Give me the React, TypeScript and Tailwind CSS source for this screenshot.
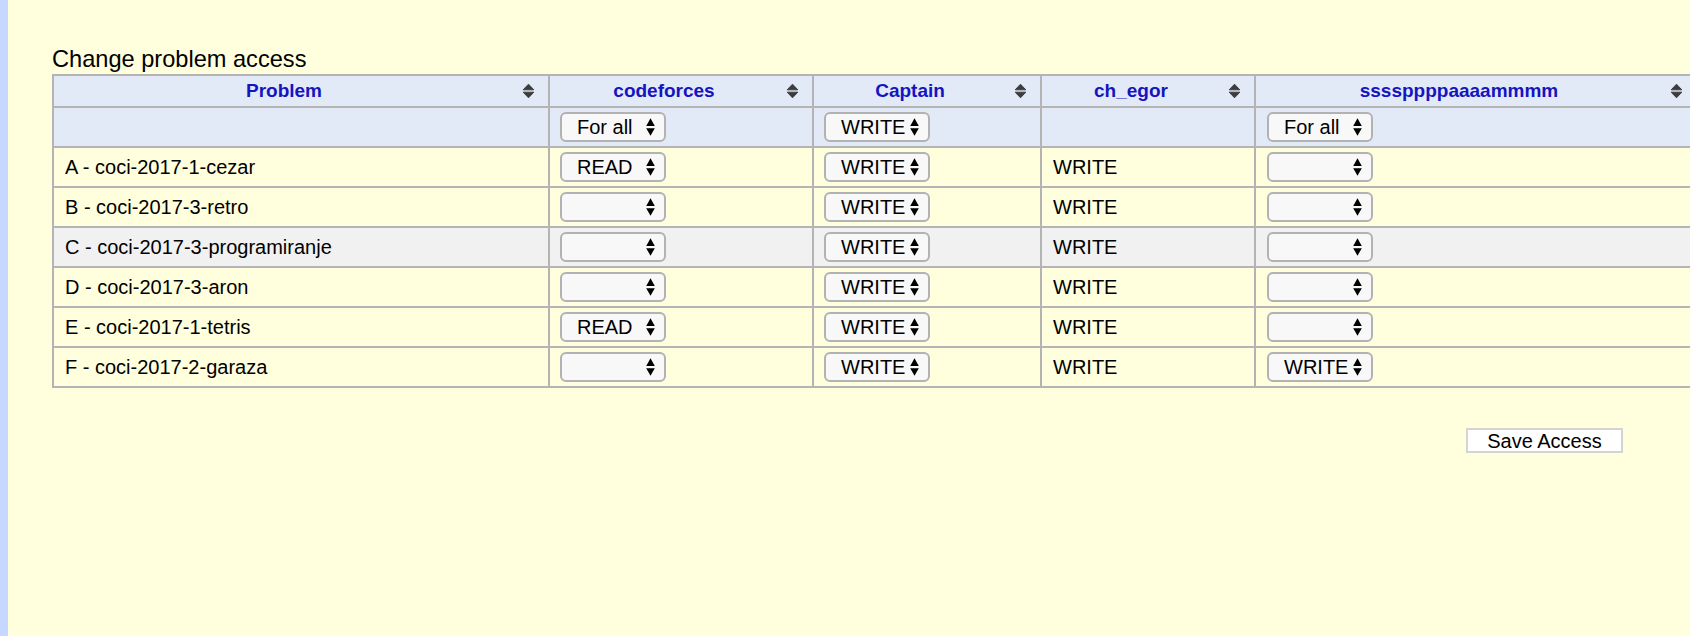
import React from "react";

type Row = {
  name: string;
  codeforces: string;
  captain: string;
  egor: string;
  spam: string;
  shaded?: boolean;
};

const rows: Row[] = [
  { name: "A - coci-2017-1-cezar", codeforces: "READ", captain: "WRITE", egor: "WRITE", spam: "" },
  { name: "B - coci-2017-3-retro", codeforces: "", captain: "WRITE", egor: "WRITE", spam: "" },
  { name: "C - coci-2017-3-programiranje", codeforces: "", captain: "WRITE", egor: "WRITE", spam: "", shaded: true },
  { name: "D - coci-2017-3-aron", codeforces: "", captain: "WRITE", egor: "WRITE", spam: "" },
  { name: "E - coci-2017-1-tetris", codeforces: "READ", captain: "WRITE", egor: "WRITE", spam: "" },
  { name: "F - coci-2017-2-garaza", codeforces: "", captain: "WRITE", egor: "WRITE", spam: "WRITE" },
];

const headers = ["Problem", "codeforces", "Captain", "ch_egor", "ssssppppaaaammmm"];

function SortIcon() {
  return (
    <svg width="13" height="16" viewBox="0 0 13 16" className="shrink-0">
      <path d="M1.2 6.8 L6.5 1.2 L11.8 6.8 Z" fill="#3d3d3d" stroke="#3d3d3d" strokeWidth="1" strokeLinejoin="round" />
      <path d="M1.2 9.2 L11.8 9.2 L6.5 14.8 Z" fill="#3d3d3d" stroke="#3d3d3d" strokeWidth="1" strokeLinejoin="round" />
    </svg>
  );
}

function SelectArrows() {
  return (
    <svg width="9" height="18" viewBox="0 0 9 18" className="shrink-0">
      <path d="M0.2 8 L4.5 0.3 L8.8 8 Z" fill="#000" />
      <path d="M0.2 10.3 L8.8 10.3 L4.5 17.7 Z" fill="#000" />
    </svg>
  );
}

function FakeSelect({ value }: { value: string }) {
  return (
    <div className="flex h-[30px] w-[106px] items-center justify-between rounded-[6px] border-2 border-[#b2b2b2] bg-[#f8f8f8] pl-[15px] pr-[9px] text-[20px] leading-none text-black">
      <span className="whitespace-nowrap">{value}</span>
      <SelectArrows />
    </div>
  );
}

function HeaderCell({ label }: { label: string }) {
  return (
    <div className="flex h-[30px] items-center bg-[#e3eaf7] pr-[13px]">
      <span className="flex-1 pr-[8px] text-center text-[19px] font-bold text-[#1414c2]">
        {label}
      </span>
      <SortIcon />
    </div>
  );
}

export default function App() {
  return (
    <div className="flex h-[636px] w-full overflow-hidden bg-[#ffffde] font-['Liberation_Sans',Arial,sans-serif] text-black">
      <div className="w-[8px] shrink-0 bg-[#c6d8ff]" />

      <div className="min-w-0 flex-1 pl-[44px]">
        <h2 className="mt-[45px] text-[23.6px] leading-[28px]">Change problem access</h2>

        <div className="mt-[1px] grid w-max grid-cols-[494px_262px_226px_212px_440px] gap-[2px] bg-[#b4b4b4] p-[2px]">
          {headers.map((label) => (
            <HeaderCell key={label} label={label} />
          ))}

          <div className="h-[38px] bg-[#e3eaf7]" />
          <div className="flex h-[38px] items-center bg-[#e3eaf7] pl-[10px]">
            <FakeSelect value="For all" />
          </div>
          <div className="flex h-[38px] items-center bg-[#e3eaf7] pl-[10px]">
            <FakeSelect value="WRITE" />
          </div>
          <div className="h-[38px] bg-[#e3eaf7]" />
          <div className="flex h-[38px] items-center bg-[#e3eaf7] pl-[11px]">
            <FakeSelect value="For all" />
          </div>

          {rows.map((row) => {
            const bg = row.shaded ? "bg-[#f1f1f1]" : "bg-[#ffffde]";
            return (
              <React.Fragment key={row.name}>
                <div className={`flex h-[38px] items-center pl-[11px] text-[20px] ${bg}`}>
                  {row.name}
                </div>
                <div className={`flex h-[38px] items-center pl-[10px] ${bg}`}>
                  <FakeSelect value={row.codeforces} />
                </div>
                <div className={`flex h-[38px] items-center pl-[10px] ${bg}`}>
                  <FakeSelect value={row.captain} />
                </div>
                <div className={`flex h-[38px] items-center pl-[11px] text-[20px] ${bg}`}>
                  {row.egor}
                </div>
                <div className={`flex h-[38px] items-center pl-[11px] ${bg}`}>
                  <FakeSelect value={row.spam} />
                </div>
              </React.Fragment>
            );
          })}
        </div>

        <div className="mt-[40px] flex justify-end pr-[67px]">
          <button
            type="button"
            className="h-[25px] w-[157px] border-2 border-[#d4d4d4] bg-white text-[20px] leading-none text-black"
          >
            Save Access
          </button>
        </div>
      </div>
    </div>
  );
}
